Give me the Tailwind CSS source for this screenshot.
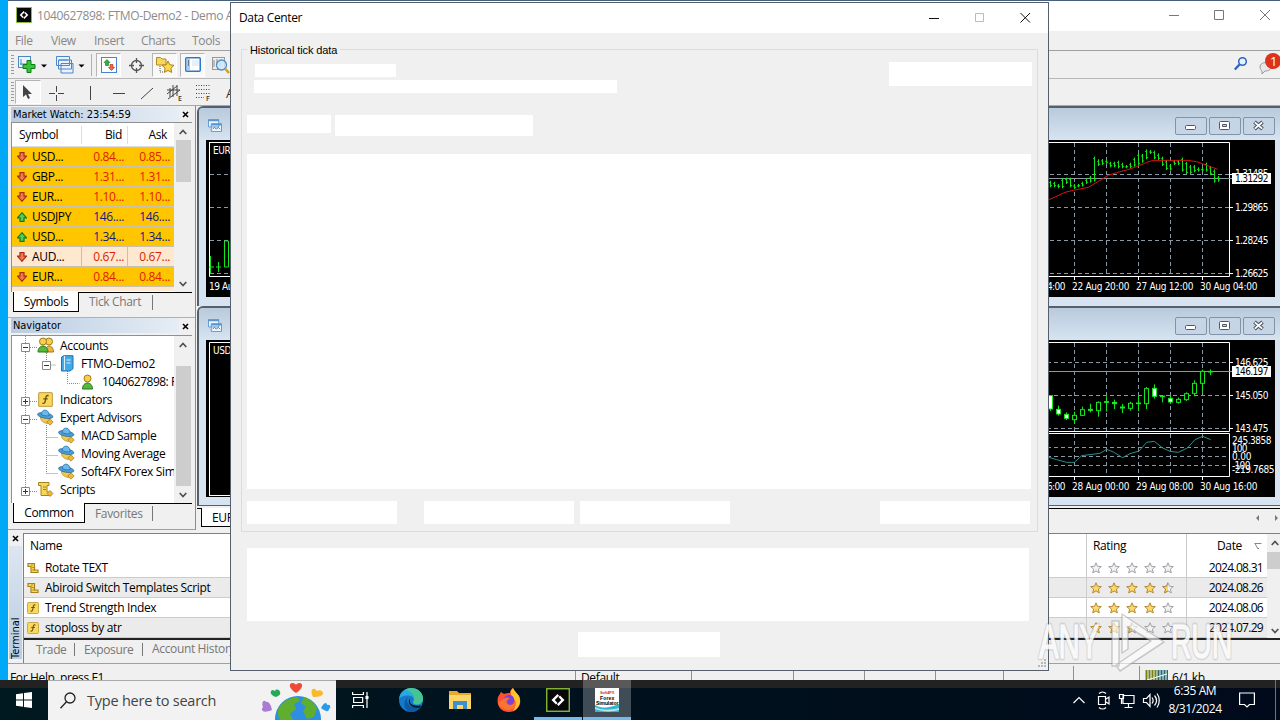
<!DOCTYPE html>
<html lang="en">
<head>
  <meta charset="UTF-8">
  <meta name="viewport" content="width=device-width, initial-scale=1.0">
  <title>Data Center</title>
  <script src="https://cdn.jsdelivr.net/npm/@tailwindcss/browser@4"></script>
</head>
<body class="relative w-[1280px] h-[720px] overflow-hidden bg-[#00a8f8] font-['Open_Sans','Noto_Sans',sans-serif] text-[12px] tracking-[-0.35px] text-black">

  <!-- shared icons -->
  <svg class="hidden">
    <symbol id="down" viewBox="0 0 10 10"><path d="M3 .7h4v3.5h2.5L5 9.3.5 4.200H3z" fill="#f07a50" stroke="#a82c18" stroke-width="1.200"/></symbol>
    <symbol id="up" viewBox="0 0 10 10"><path d="M3 9.300h4V5.800h2.500L5 .7.500 5.800H3z" fill="#4fd05c" stroke="#127a26" stroke-width="1.200"/></symbol>
    <symbol id="star" viewBox="0 0 12 12"><path d="M6 .8 7.500 4.300l3.800.3-2.900 2.500.9 3.800L6 8.900l-3.300 2 .9-3.800L.7 4.600l3.800-.3z"/></symbol>
    <symbol id="script" viewBox="0 0 12 12"><path d="M1 1.500h6.500V8H11v2.500H4V4.500H1z" fill="#f5d75a" stroke="#a8821c" stroke-width="1.200"/><path d="M4 3h2M5 5.500h2M5 8h3" stroke="#a8821c" stroke-width=".8"/></symbol>
    <symbol id="func" viewBox="0 0 12 12"><rect x=".5" y=".5" width="11" height="11" rx="1" fill="#f8d95e" stroke="#c8a850"/><path d="M8.500 3C6.500 2.300 6.200 4 6 6S5.300 9.500 3.500 9M4.200 5.500h3.600" fill="none" stroke="#6b5210" stroke-width="1.100"/></symbol>
    <symbol id="hat" viewBox="0 0 17 17"><path d="M3.500 8c0 4 3 6 7 6.500l3-6z" fill="#f3c948" stroke="#a8821c" stroke-width=".7"/><ellipse cx="8.200" cy="6.500" rx="7.800" ry="2.700" transform="rotate(10 8 6.500)" fill="#4b9fd8" stroke="#2468a0" stroke-width=".7"/><path d="M4.200 5.500c.3-6 7.700-6 8 .8-2 1.200-6 .4-8-.8z" fill="#6bb8ea" stroke="#2468a0" stroke-width=".7"/><path d="m13 9.800 3.200 3.200-3.200 3.200L9.800 13z" fill="#efb83c" stroke="#a87314" stroke-width=".7"/></symbol>
    <symbol id="charts" viewBox="0 0 15 14"><path d="M.5 .5h11v8H.5zM3.500 5h11v8.500h-11z" fill="#eef6ff" stroke="#5d95d0"/><path d="M.5 1.500h11M3.500 6h11" stroke="#5d95d0" stroke-width="2"/><path d="m5 11 2-2 2 2 2-2 2 2" fill="none" stroke="#3d78b8"/></symbol>
    <symbol id="chevup" viewBox="0 0 8 6"><path d="m.7 5 3.300-3.500L7.300 5" fill="none" stroke="#505050" stroke-width="1.700"/></symbol>
    <symbol id="chevdown" viewBox="0 0 8 6"><path d="m.7 1 3.300 3.500L7.300 1" fill="none" stroke="#505050" stroke-width="1.700"/></symbol>
    <symbol id="close" viewBox="0 0 7 7"><path d="m1 1 5 5M6 1 1 6" stroke="#000" stroke-width="1.600"/></symbol>
    <symbol id="mt" viewBox="0 0 24 24"><rect x=".75" y=".75" width="22.500" height="22.500" fill="#080808" stroke="#8fc43c" stroke-width="1.300"/><path d="m11.500 6-6 6 4.500 4.500 1.500-1.500-2.700-3 4.200-4.200zM12.500 18l6-6L14 7.500 12.500 9l2.700 3L11 16.200z" fill="#fff"/></symbol>
  </svg>

  <!-- terminal window -->
  <div class="absolute left-2 top-0 w-[1272px] h-[681px] flex flex-col bg-[#f0f0f0] overflow-hidden border-t border-[#46607c]">
    <div class="h-[30px] shrink-0 bg-white flex items-center pl-2 text-[#8c8c8c]">
      <svg class="w-4 h-4 -mt-[3px]"><use href="#mt"/></svg>
      <span class="ml-[5px] whitespace-nowrap">1040627898: FTMO-Demo2 - Demo Account</span>
      <svg class="ml-auto mr-3 -mt-[2px] w-[102px] h-4 overflow-visible" viewBox="0 0 102 16" fill="none" stroke="#777"><path d="M3 8.500h10M48.500 3.500h9v9h-9zM94 3l10 10M104 3 94 13"/></svg>
    </div>
    <div class="h-5 shrink-0 flex items-center pl-[7px] text-[#878787] border-b border-[#a0a0a0]">
      <span class="w-9">File</span><span class="w-[43px]">View</span><span class="w-[47px]">Insert</span><span class="w-[51px]">Charts</span><span>Tools</span>
    </div>

    <div class="h-[28px] shrink-0 flex items-center border-b border-[#b8b8b8]">
      <svg class="w-2 h-6 shrink-0"><path d="M4.500 2v20" stroke="#999" stroke-width="3" stroke-dasharray="1 2"/></svg>
      <svg class="w-[22px] h-5 shrink-0" viewBox="1 1 22 20"><rect x="3.500" y="2.500" width="12" height="11" fill="#eaf4ff" stroke="#4f86c6"/><path d="M6 5v6M5 10h8" stroke="#4f86c6"/><path d="M12 6.500h4v4h4v4h-4v4h-4v-4H8v-4h4z" fill="#35c43c" stroke="#137a1c"/></svg>
      <svg class="w-3 h-5 shrink-0"><path d="M3 9.500h6L6 12.500z"/></svg>
      <svg class="ml-1 w-[22px] h-5 shrink-0" viewBox="0 0 22 20"><path d="M2.500 1.500h13v9h-13zM4.500 5h13v9h-13zM7 8.500h12V18H7z" fill="#e8f3ff" stroke="#4f86c6"/><path d="M5 5h9M7 8.500h9" stroke="#4f86c6"/></svg>
      <svg class="w-3 h-5 shrink-0"><path d="M2.500 9.500h6L5.500 12.500z"/></svg>
      <span class="ml-[3px] mr-1 w-px h-[22px] bg-[#b0b0b0]"></span>
      <span class="w-[25px] h-6 shrink-0 border border-[#b5b5b5] border-r-white border-b-white bg-[#f8f8f8] flex items-center justify-center"><svg class="w-4 h-4" viewBox="0 0 16 16"><rect x=".5" y=".5" width="15" height="15" fill="#fff" stroke="#4684cc"/><path d="m6 2.500 3 3H7.500v3h-3v-3H3z" fill="#2db13d" stroke="#137a1c" stroke-width=".6"/><path d="m10.500 13.500-3-3H9v-3h3v3h1.500z" fill="#f06848" stroke="#b42815" stroke-width=".6"/></svg></span>
      <svg class="ml-[3px] w-[25px] h-5 shrink-0" viewBox="0 0 25 20" fill="none" stroke="#555" stroke-width="1.300"><circle cx="12.500" cy="10.500" r="5"/><path d="M12.500 3v5m0 5v5M5 10.500h5m5 0h5"/></svg>
      <span class="ml-[3px] w-[25px] h-6 shrink-0 border border-[#b5b5b5] border-r-white border-b-white bg-[#f8f8f8] flex items-center justify-center"><svg class="w-5 h-[18px]" viewBox="0 0 20 18"><path d="M1.500 3V1.500h4L7 3h4v6H1.500z" fill="#f8d85c" stroke="#b18a20"/><path d="M5 10v6h3" fill="none" stroke="#555" stroke-dasharray="1 1"/><path d="m13 5 1.800 3.800 4.200.5-3.100 2.900.8 4.200L13 14.500l-3.700 1.900.8-4.200L7 9.300l4.200-.5z" fill="#fbd94f" stroke="#ad8210"/></svg></span>
      <span class="ml-[3px] w-[25px] h-6 shrink-0 border border-[#b5b5b5] border-r-white border-b-white bg-[#f8f8f8] flex items-center justify-center"><svg class="w-4 h-[15px]" viewBox="0 0 16 15"><rect x=".75" y=".75" width="14.500" height="13.500" rx="1" fill="#fff" stroke="#2e78c4" stroke-width="1.500"/><path d="M2 2h3v11H2z" fill="#a8cdf0"/><path d="M3 4h1M3 6h1M3 8h1" stroke="#223"/><path d="M7 4h7M7 6h7M7 8h7" stroke="#cfe0f4"/></svg></span>
      <svg class="ml-[6px] w-5 h-5 shrink-0" viewBox="0 0 20 20"><rect x="1.500" y="2.500" width="12" height="12" fill="#eee" stroke="#999"/><path d="M3 5v7m3-8v6m3-4v5" stroke="#888"/><circle cx="10.500" cy="10" r="5" fill="#cfe8fb" fill-opacity=".85" stroke="#4e8fc8" stroke-width="1.300"/><path d="m14 13.500 4 4.500" stroke="#d8a018" stroke-width="2.500"/></svg>
      <svg class="ml-auto w-[46px] h-6 shrink-0 -mt-px" viewBox="0 0 46 24"><circle cx="8.500" cy="9.500" r="3.800" fill="#e7f1ff" stroke="#2f5fc0" stroke-width="1.500"/><path d="M5.500 12.500.8 17.500" stroke="#2f5fc0" stroke-width="2.300"/><path d="M26 15c0-6 11-6 11 0 0 3-3 4-6 4l-3 3v-3c-1-1-2-2-2-4z" fill="#e8e8e8" stroke="#999"/><circle cx="39" cy="9" r="8" fill="#df321c"/><text x="36" y="13.500" fill="#fff" font-size="13" font-family="Open Sans">1</text></svg>
    </div>
    <div class="h-[27px] shrink-0 flex items-center border-b border-[#a8a8a8]">
      <svg class="w-[7px] h-6 shrink-0"><path d="M4.500 2v20" stroke="#999" stroke-width="3" stroke-dasharray="1 2"/></svg>
      <span class="w-[26px] h-6 border border-[#b5b5b5] border-r-white border-b-white bg-[#f8f8f8] flex items-center justify-center"><svg class="w-3 h-4" viewBox="1 0 12 16"><path d="M2 1v12l3-2.500L7 15l2-1-2-4h4z" fill="#444"/></svg></span>
      <svg class="w-[190px] h-6" viewBox="41 -1 190 24" fill="none" stroke="#444" stroke-width="1"><path d="M49 12.500h6m3 0h6M56.500 5v6m0 3v6M90.500 5v14M113 12.500h12M141 18l12-11M167 13l10-8M168 18l12-9M170 7v9m3-12v12m4-12v11M167 9h13"/><path d="M196 4.500h14M196 8.500h14M196 12.500h14M196 16.500h8" stroke-dasharray="1 1.500"/><g fill="#333" stroke="none" font-size="7" font-family="Open Sans" font-weight="600"><text x="178" y="20">E</text><text x="206" y="20">F</text><text x="226" y="17" font-size="13" font-weight="400">A</text></g></svg>
    </div>

    <div class="h-[424px] shrink-0 flex">
      <!-- side panels -->
      <div class="w-[188px] shrink-0 flex flex-col border-r border-[#8c8c8c]">
        <div class="h-[212px] shrink-0 flex flex-col px-[3px] border-b border-[#b0b0b0]">
          <div class="h-4 flex items-center justify-between pr-[3px] font-['DejaVu_Sans_Condensed','DejaVu_Sans',sans-serif] text-[11px] tracking-[-0.05px]"><span class="pl-[2px] h-[15px] leading-[15px] w-[168px] bg-linear-to-r from-[#b9cde2] to-[#e6edf5]">Market Watch: 23:54:59</span><svg class="w-[7px] h-[7px]"><use href="#close"/></svg></div>
          <div class="h-[170px] flex bg-white border-t border-l border-[#909090] overflow-hidden">
            <div class="w-[162px] shrink-0">
              <div class="h-6 grid grid-cols-[69px_46px_47px] items-center border-b border-[#ddd]"><span class="pl-[7px]">Symbol</span><span class="text-right pr-[5px] border-l border-[#ddd]">Bid</span><span class="text-right pr-[7px] border-l border-[#ddd]">Ask</span></div>
              <div id="quotes"></div>
            </div>
            <div class="flex-1 bg-[#f0f0f0] flex flex-col items-center"><svg class="mt-[6px] mb-[5px] w-2 h-[6px]"><use href="#chevup"/></svg><span class="w-[15px] h-[42px] bg-[#cdcdcd]"></span><svg class="mt-auto mb-[5px] w-2 h-[6px]"><use href="#chevdown"/></svg></div>
          </div>
          <div class="h-5 ml-[2px] flex border-t border-black text-[#777]"><span class="w-[66px] h-5 -mt-px border border-t-0 border-black bg-white text-black text-center leading-5">Symbols</span><span class="w-[74px] my-[2px] pl-[10px] leading-[14px] border-r border-[#777]">Tick Chart</span></div>
        </div>
        <div class="flex-1 flex flex-col px-[3px] border-b border-[#a0a0a0]">
          <div class="h-[17px] flex items-start justify-between pr-[3px] font-['DejaVu_Sans_Condensed','DejaVu_Sans',sans-serif] text-[11px] tracking-[-0.05px]"><span class="pl-[2px] h-[15px] leading-[15px] w-[168px] bg-linear-to-r from-[#b9cde2] to-[#e6edf5]">Navigator</span><svg class="mt-[5px] w-[7px] h-[7px]"><use href="#close"/></svg></div>
          <div class="h-[168px] flex bg-white border-t border-l border-[#909090]">
            <div class="relative w-[162px] shrink-0 overflow-hidden">
              <svg class="absolute left-0 top-0 w-20 h-[168px]" viewBox="12 335 80 168" fill="none"><path d="M25.500 335v155M30 346.500h7M30 400.500h7M30 418.500h7M30 490.500h7M46.500 352v12h10M67.500 370v12.500h12M46.500 424v48.500M46.500 436.500h12M46.500 454.500h12M46.500 472.500h12" stroke="#888" stroke-dasharray="1 1"/><g fill="#fff" stroke="#888"><path d="M21.500 342.500h8v8h-8zM42.500 360.500h8v8h-8zM21.500 396.500h8v8h-8zM21.500 414.500h8v8h-8zM21.500 486.500h8v8h-8z"/></g><path d="M23 346.500h5M44 364.500h5M23 400.500h5M25.500 398v5M23 418.500h5M23 490.500h5M25.500 488v5" stroke="#334"/></svg>
              <div id="tree" class="relative pt-px"></div>
            </div>
            <div class="flex-1 bg-[#f0f0f0] flex flex-col items-center"><svg class="my-[6px] w-2 h-[6px]"><use href="#chevup"/></svg><span class="mt-3 w-[15px] h-[120px] bg-[#cdcdcd]"></span><svg class="mt-auto mb-[5px] w-2 h-[6px]"><use href="#chevdown"/></svg></div>
          </div>
          <div class="h-5 ml-[2px] flex border-t border-black text-[#777]"><span class="w-[72px] h-5 -mt-px border border-t-0 border-black bg-white text-black text-center leading-5">Common</span><span class="w-[68px] my-[2px] pl-[10px] leading-[15px] border-r border-[#777]">Favorites</span></div>
        </div>
      </div>

      <!-- chart windows -->
      <div class="flex-1 flex flex-col pl-px overflow-hidden">
        <div class="h-[200px] shrink-0 border-t-2 border-l-2 border-[#55606c] rounded-tl-md bg-[#d7e3f0] flex flex-col">
          <div class="h-8 shrink-0 flex items-center gap-[2px] bg-linear-to-b from-[#b8cadc] to-[#d7e4f1] rounded-tl pl-[9px] pr-[5px] pt-[3px]">
            <svg class="w-[14px] h-[13px] mr-auto"><use href="#charts"/></svg>
            <svg class="w-8 h-[18px]"><use href="#wmin"/></svg><svg class="w-8 h-[18px]"><use href="#wmax"/></svg><svg class="w-8 h-[18px]"><use href="#wclose"/></svg>
          </div>
          <svg class="ml-[7px] w-[1069px] h-[157px] shrink-0 bg-black" viewBox="206 140 1069 157" font-family="DejaVu Sans Condensed, DejaVu Sans" font-size="10" fill="#fff">
            <path d="M209 142.500H1229.500V276.500H209.500V142.500" fill="none" stroke="#fff"/>
            <path d="M210 174.500H1229M210 207.500H1229M210 240.500H1229M210 273.500H1229M1074.500 143V276M1106.500 143V276M1138.500 143V276M1170.500 143V276M1202.500 143V276" stroke="#8a98a6" stroke-dasharray="4 3"/>
            <path d="M1040 178.500H1232" stroke="#8a98a6"/>
            <path d="M1230 174.500h3M1230 207.500h3M1230 240.500h3M1230 273.500h3M1074.500 277v3M1138.500 277v3M1202.500 277v3" stroke="#fff"/>
            <g transform="translate(1040 110) scale(.33333)" fill="none" stroke-width="3">
              <path id="bars" stroke="#14e81c"/>
              <path d="M15 274 48 260 75 247 100 241 145 232 175 214 205 196 230 188 260 180 290 170 320 157 340 151H440L470 155 500 166 533 178" stroke="#e01010"/>
            </g>
            <path d="M210.500 256v18M209 267h5M218.500 262v10M216 267h5M224.500 241v26h4v-26z" fill="none" stroke="#14e81c"/>
            <text x="213" y="154">EUR</text><text x="209" y="289.500" textLength="24">19 Au</text>
            <text x="1047" y="289.500" textLength="18">4:00</text><text x="1072" y="289.500" textLength="57">22 Aug 20:00</text><text x="1136" y="289.500" textLength="57">27 Aug 12:00</text><text x="1200" y="289.500" textLength="57">30 Aug 04:00</text>
            <text x="1235" y="177" textLength="33">1.31485</text><text x="1235" y="211" textLength="33">1.29865</text><text x="1235" y="244" textLength="33">1.28245</text><text x="1235" y="277" textLength="33">1.26625</text>
            <path d="M1232 173h39v11h-39z"/><text x="1235" y="182" textLength="33" fill="#000">1.31292</text>
          </svg>
        </div>
        <div class="h-[200px] shrink-0 border-t-2 border-l-2 border-[#55606c] rounded-tl-md bg-[#d7e3f0] flex flex-col border-b">
          <div class="h-8 shrink-0 flex items-center gap-[2px] bg-linear-to-b from-[#b8cadc] to-[#d7e4f1] rounded-tl pl-[9px] pr-[5px] pt-[3px]">
            <svg class="w-[14px] h-[13px] mr-auto"><use href="#charts"/></svg>
            <svg class="w-8 h-[18px]"><use href="#wmin"/></svg><svg class="w-8 h-[18px]"><use href="#wmax"/></svg><svg class="w-8 h-[18px]"><use href="#wclose"/></svg>
          </div>
          <svg class="ml-[7px] w-[1069px] h-[157px] shrink-0 bg-black" viewBox="206 340 1069 157" font-family="DejaVu Sans Condensed, DejaVu Sans" font-size="10" fill="#fff">
            <path d="M209.500 495.500V342.500H1229.500V431.500H1040M1040 433.500H1229.500V476.500H1040M209 495.500h30" fill="none" stroke="#fff"/>
            <path d="M1040 362.500H1229M1040 395.500H1229M1040 428.500H1229M1040 447.500H1229M1040 456.500H1229M1040 465.500H1229M1074.500 343V476M1106.500 343V476M1138.500 343V476M1170.500 343V476M1202.500 343V476" stroke="#8a98a6" stroke-dasharray="4 3"/>
            <path d="M1040 371.500H1232" stroke="#8a98a6"/>
            <path d="M1230 362.500h3M1230 395.500h3M1230 428.500h3M1074.500 477v3M1138.500 477v3M1202.500 477v3" stroke="#fff"/>
            <g transform="translate(1040 305) scale(.33333)" stroke-width="3">
              <g id="candles" stroke="#14e81c"></g>
              <path d="M20 455 50 464 80 472H103L125 452 180 445 200 433 220 441 248 458 270 446 297 438 320 412 343 409 368 429 390 439 415 442 442 429 465 404 488 394 512 404" fill="none" stroke="#2f8f8a"/>
            </g>
            <text x="213" y="354">USD</text>
            <text x="1047" y="489.500" textLength="18">6:00</text><text x="1072" y="489.500" textLength="57">28 Aug 00:00</text><text x="1136" y="489.500" textLength="57">29 Aug 08:00</text><text x="1200" y="489.500" textLength="57">30 Aug 16:00</text>
            <text x="1235" y="366" textLength="33">146.625</text><text x="1235" y="399" textLength="33">145.050</text><text x="1235" y="432" textLength="33">143.475</text>
            <text x="1232" y="444" textLength="39">245.3858</text><text x="1232" y="451.500" textLength="15">100</text><text x="1232" y="460" textLength="19">0.00</text><text x="1232" y="468.500" textLength="18">-100</text><text x="1232" y="473" textLength="42">-219.7685</text>
            <path d="M1232 366h39v11h-39z"/><text x="1235" y="375" textLength="33" fill="#000">146.197</text>
          </svg>
        </div>
        <div class="mt-[2px] h-[22px] shrink-0 flex border-t border-black bg-[#f0f0f0]">
          <span class="ml-1 w-20 h-[19px] pl-[10px] leading-[20px] bg-white border border-t-0 border-black -mt-px">EURUSD</span>
          <svg class="ml-auto w-7 h-4 mt-[1px]"><path d="M7 5v6L4 8zM23 5v6l3-3z" fill="#777"/></svg>
        </div>
      </div>
    </div>

    <!-- terminal panel -->
    <div class="h-[134px] shrink-0 flex border-b border-[#a0a0a0]">
      <div class="w-[15px] shrink-0 flex flex-col items-center">
        <svg class="mt-[5px] mb-1 w-[7px] h-[7px] shrink-0"><use href="#close"/></svg>
        <span class="flex-1 w-[13px] mb-1 bg-linear-to-b from-[#b9cde2] to-[#dce6f1] [writing-mode:vertical-rl] rotate-180 leading-[13px] font-['DejaVu_Sans_Condensed','DejaVu_Sans',sans-serif] text-[11px] tracking-[0px]">Terminal</span>
      </div>
      <div class="flex-1 mt-[3px] flex flex-col border-t border-l border-[#808080]">
        <div class="h-[106px] shrink-0 flex border-b-2 border-[#222] bg-white overflow-hidden">
          <div class="flex-1">
            <div class="h-6 grid grid-cols-[1062px_100px_81px] items-center"><span class="pl-[6px]">Name</span><span class="h-full border-l border-[#ccc] pl-[6px] leading-6">Rating</span><span class="h-full border-l border-[#ccc] pl-[30px] leading-6 flex items-center">Date<svg class="ml-3 w-[8px] h-[8px]"><path d="M.5 1.500h7M1 1.500 4 7l1-1" fill="none" stroke="#888"/></svg></span></div>
            <div id="market"></div>
          </div>
          <div class="w-[13px] bg-[#f0f0f0] flex flex-col items-center"><svg class="my-[6px] ml-[2px] w-2 h-[6px]"><use href="#chevup"/></svg><span class="w-full h-[17px] bg-[#cdcdcd]"></span><svg class="mt-auto mb-1 ml-[2px] w-2 h-[6px]"><use href="#chevdown"/></svg></div>
        </div>
        <div class="flex items-center h-[18px] text-[#777]"><span class="w-[51px] pl-3 leading-[13px] border-r border-[#777]">Trade</span><span class="w-[68px] pl-[9px] leading-[13px] border-r border-[#777]">Exposure</span><span class="pl-[9px]">Account History</span></div>
      </div>
    </div>
    <div class="h-6 shrink-0 mt-[2px] grid grid-cols-[567px_116px_102px_71px_71px_68px_70px_66px_1fr] leading-[24px] overflow-hidden">
      <span class="pl-[2px]">For Help, press F1</span>
      <span class="border-l border-[#909090] pl-[5px]">Default</span>
      <span class="border-l border-[#909090]"></span><span class="border-l border-[#909090]"></span><span class="border-l border-[#909090]"></span><span class="border-l border-[#909090]"></span><span class="border-l border-[#909090]"></span><span class="border-l border-[#909090]"></span>
      <span class="border-l border-[#909090] pl-[5px] flex"><svg class="mt-1 w-[23px] h-4 mr-1"><path d="M1.500 0v16M4.500 0v16M7.500 0v16M10.500 0v16" stroke="#758216" stroke-width="2"/><path d="M13.500 0v16M16.500 0v16M19.500 0v16M22.500 0v16" stroke="#226a70" stroke-width="2"/><path d="M2 10 22 4" stroke="#fff"/></svg>6/1 kb</span>
    </div>
  </div>

  <!-- child window buttons -->
  <svg class="hidden">
    <symbol id="wmin" viewBox="0 0 32 18"><rect x=".5" y=".5" width="31" height="17" rx="1.500" fill="#c6d5e5" stroke="#8292a8"/><rect x="10.500" y="8.500" width="10" height="4" rx="1" fill="#fff" stroke="#505866"/></symbol>
    <symbol id="wmax" viewBox="0 0 32 18"><rect x=".5" y=".5" width="31" height="17" rx="1.500" fill="#c6d5e5" stroke="#8292a8"/><rect x="10.500" y="4.500" width="10" height="8" rx="1" fill="#fff" stroke="#505866"/><path d="M13.500 7.500h4v2h-4z" fill="#c6d5e5" stroke="#505866"/></symbol>
    <symbol id="wclose" viewBox="0 0 32 18"><rect x=".5" y=".5" width="31" height="17" rx="1.500" fill="#c6d5e5" stroke="#8292a8"/><path d="m11.500 5 8 7m0-7-8 7" stroke="#505866" stroke-width="3.800"/><path d="m11.900 5.300 7.200 6.400m0-6.400-7.200 6.400" stroke="#fff" stroke-width="1.800"/></symbol>
  </svg>

  <!-- Data Center dialog -->
  <div class="absolute left-[230px] top-[2px] w-[819px] h-[669px] flex flex-col bg-[#f0f0f0] border border-[#56606c]">
    <div class="h-[30px] shrink-0 bg-white flex items-center pl-2"><span>Data Center</span>
      <svg class="ml-auto w-[116px] h-4 overflow-visible" viewBox="0 0 116 16" fill="none" stroke="#111"><path d="M-3 8.500h10"/><path d="M43.500 3.500h8v8h-8z" stroke="#bbb"/><path d="m88.500 3 9.500 9.500M98 3l-9.500 9.500"/></svg>
    </div>
    <div class="relative ml-[10px] mt-4 w-[797px] h-[483px] shrink-0 border border-[#dcdcdc] flex flex-col pl-[5px]">
      <span class="absolute -top-2 left-[5px] px-[3px] bg-[#f0f0f0] leading-[17px] font-['Liberation_Sans',sans-serif] text-[11px] tracking-[-0.1px]">Historical tick data</span>
      <div class="mt-3 flex h-[53px]">
        <div class="w-[642px] pl-[7px] pt-[2px]"><div class="ml-px w-[141px] h-[13px] bg-white"></div><div class="mt-[3px] w-[363px] h-[13px] bg-white"></div></div>
        <div class="w-[143px] h-6 bg-white"></div>
      </div>
      <div class="flex gap-1 h-[39px]"><div class="w-[84px] h-[18px] bg-white"></div><div class="w-[198px] h-[21px] bg-white"></div></div>
      <div class="w-[784px] h-[335px] bg-white"></div>
      <div class="mt-3 flex h-[23px]"><div class="w-[150px] bg-white"></div><div class="ml-[27px] w-[150px] bg-white"></div><div class="ml-[6px] w-[150px] bg-white"></div><div class="ml-[150px] w-[150px] bg-white"></div></div>
    </div>
    <div class="mt-4 ml-4 w-[782px] h-[73px] shrink-0 bg-white"></div>
    <div class="mt-[11px] flex justify-between"><div class="ml-[347px] w-[142px] h-[25px] bg-white"></div><svg class="w-3 h-3 mt-[25px]"><path d="M8 2h2v2H8zM5 5h2v2H5zM8 5h2v2H8zM2 8h2v2H2zM5 8h2v2H5zM8 8h2v2H8z" fill="#b8b8b8"/></svg></div>
  </div>

  <!-- watermark -->
  <svg class="absolute left-[1034px] top-[610px] w-[204px] h-[68px]" viewBox="1034 610 204 68" font-family="Liberation Sans Narrow, Liberation Sans" font-size="48" fill="#fff" fill-opacity=".6">
    <g stroke="#888" stroke-opacity=".22" stroke-width="5" stroke-linejoin="round" paint-order="stroke">
      <text x="1039" y="658" textLength="60" lengthAdjust="spacingAndGlyphs">ANY</text>
      <text x="1171" y="658" textLength="61" lengthAdjust="spacingAndGlyphs">RUN</text>
    </g>
    <g stroke="#fff" stroke-opacity=".6" stroke-width="1.500">
      <text x="1039" y="658" textLength="60" lengthAdjust="spacingAndGlyphs">ANY</text>
      <text x="1171" y="658" textLength="61" lengthAdjust="spacingAndGlyphs">RUN</text>
    </g>
    <path d="M1112 621h7v45h-7zM1122 614l42 28-44 29-4-6 35-24-23-14v22l-6 4z" stroke="#888" stroke-opacity=".4" stroke-width="1.500" stroke-linejoin="round"/>
  </svg>

  <!-- taskbar -->
  <div class="absolute left-0 top-[680px] w-[1280px] h-10 flex bg-linear-to-r from-[#001820] to-[#000a1a] text-white">
    <div class="absolute inset-x-0 top-0 h-2 bg-[#222]"></div>
    <div class="relative w-12 flex items-center justify-center"><svg class="w-4 h-4" viewBox="0 0 16 16"><path d="M0 2.200 7 1.200v6.300H0zM8 1l8-1v7.500H8zM0 8.500h7v6.300l-7-1zM8 8.500h8V16l-8-1z" fill="#fff"/></svg></div>
    <div class="relative w-72 bg-[#f2f2f2] border-t border-[#aaa] flex items-center text-[#444]">
      <svg class="ml-3 w-4 h-[17px]" viewBox="0 0 16 17" fill="none" stroke="#222" stroke-width="1.300"><circle cx="10" cy="6" r="5"/><path d="m6.500 9.700-6 6.500"/></svg>
      <span class="ml-[11px] text-[14.500px] tracking-[-0.22px]">Type here to search</span>
      <svg class="ml-auto mr-[5px] w-[70px] h-[39px]" viewBox="261 681 70 39"><circle cx="298" cy="719" r="23" fill="#2e8fe0"/><path d="M280 706c5-6 12-9 18-9l2 4-6 3 2 5-6 5 3 6h-12c-4-4-4-10-1-14zM304 697c6 2 10 6 13 11l-3 9-7 2-4-8 3-4-5-4z" fill="#5fae2e"/><path d="M296 693c-8-5-7-10-3.500-10 2 0 3 1 3.500 2 .5-1 1.500-2 3.500-2 3.500 0 4.500 5-3.500 10z" fill="#ee4a35"/><path d="M276 697c-7-2-6-7-3-7l2 1c1-2 4-2 5 1 1 2-1 4-4 5z" fill="#25a85a"/><path d="M313 697c-3-6-1-9 2-8l2 2c3-2 6 0 6 2 0 3-4 4-10 4z" fill="#f9b928"/><path d="M272 710c-9 4-12 0-9-3-2-5 1-8 3-5 3-1 5 3 6 8z" fill="#a97bd4"/><path d="M321 708c3-6 6-6 6-3 4-1 4 3 2 4 0 3-3 3-8-1z" fill="#2b9be8"/></svg>
    </div>
    <div class="relative w-12 mr-[3px] flex items-center justify-center"><svg class="w-[17px] h-4" viewBox="0 0 17 16" fill="none" stroke="#fff" stroke-width="1.200"><path d="M.6 0v2.500h10.800V0M1.600 5.500h9v5h-9zM.6 16v-2.500h10.800V16M15 0v16"/><path d="M13.500 4h3v3h-3z" fill="#fff" stroke="none"/></svg></div>
    <div class="relative flex gap-px">
      <div class="w-12 flex items-center justify-center"><svg class="w-6 h-6" viewBox="0 0 24 24"><circle cx="12" cy="12" r="12" fill="#1479c8"/><path d="M0 11C1 4 6 0 12 0c7 0 12 5 12 10.500 0 4-3 6-6.500 6-3 0-4-1.500-3-3 1.500-3-1-6-5-6C5 7.500 1 9 0 11z" fill="#2aa9dc"/><path d="M12 0c7 0 12 5 12 10.500 0 4-3 6-6.500 6-3 0-4-1.500-3-3C17 9 14 3 6 2c2-1.300 4-2 6-2z" fill="#52cf78" fill-opacity=".75"/><path d="M9 9c-3 5 1 12 12 10-3 4-7 5-10 5-6-2-8-10-2-15z" fill="#0c59a4"/><path d="M11.500 10c-2 4 0 9 10.500 7.500l-1 2C12 21 7 14 11.500 10z" fill="#001620"/></svg></div>
      <div class="w-12 flex items-center justify-center"><svg class="w-[22px] h-[18px]" viewBox="0 0 22 18"><path d="M0 0h8l2 2h12v15H0z" fill="#e9a92a"/><path d="M0 4h22v14H0z" fill="#fcd667"/><path d="M4 18v-8h14v8h-4v-4H8v4z" fill="#3d8fd0"/></svg></div>
      <div class="w-12 flex items-center justify-center"><svg class="w-6 h-6" viewBox="0 0 24 24"><path d="M4 4 7 6c2-1 4-1 6-1 0-2 1-4 3-5 1 3 4 5 6 8 4 8-2 16-10 16S-1 18 1 9c1-2 2-3 3-5z" fill="#ff5035"/><path d="M16 0c1 3 4 5 6 8 3 7-1 13-6 15 4-6 3-10 0-13-2-2-4-6 0-10z" fill="#ffc42c"/><circle cx="12" cy="12" r="5.300" fill="#7d43d6"/><path d="M1 13c2 2 4-1 7-3 2-1 4 0 5 1-2 0-4 2-3 4 3 4 8 1 9-3 1 6-3 10-7 10-6 0-11-4-11-9z" fill="#ff7a2c" fill-opacity=".85"/></svg></div>
      <div class="w-12 flex items-center justify-center border-b-3 border-[#76b9ed]"><svg class="w-6 h-6 mt-[3px]"><use href="#mt"/></svg></div>
      <div class="w-12 flex items-center justify-center border-b-3 border-[#76b9ed] bg-white/25"><svg class="w-6 h-6 mt-[3px]" viewBox="0 0 24 24"><path d="M0 0h24v24H0z" fill="#fff"/><path d="M0 17c8 4 14 3 24-1v8H0z" fill="#37b4d0"/><path d="M0 19c8 4 16 3 24 1v2c-8 2-16 2-24-1z" fill="#b6e8f0"/><g font-family="Liberation Sans" font-weight="700"><text x="5" y="6" font-size="4" fill="#c33" textLength="14">Soft4FX</text><text x="5" y="12" font-size="5" textLength="14">Forex</text><text x="1" y="16.500" font-size="5" textLength="22">Simulator</text></g></svg></div>
    </div>
    <div class="relative ml-auto flex items-center">
      <svg class="w-[94px] h-5" viewBox="1070 690 94 20" fill="none" stroke="#fff" stroke-width="1.200"><path d="m1073.500 703 5.500-5.500 5.500 5.500M1098.500 696.500h7v8h-7zM1106 699l3-2v7l-3-2M1099 693.500c2-2 5-2 7 0M1099 707.500c2 2 5 2 7 0M1123 695.500h11v8h-11zM1128.500 704v3M1124.500 707.500h8M1119.500 694.500h4v4h-4zM1121.500 699v5M1143.500 698.500h3l3.500-4v12l-3.500-4h-3zM1152 697.500c1.500 2 1.500 4 0 6M1154.500 695.500c2.500 3 2.500 7 0 10M1157 693.500c3 4 3 10 0 14"/></svg>
      <div class="w-[62px] -mt-px text-center leading-[18px] text-[12px] tracking-[-0.4px]"><div>6:35 AM</div><div>8/31/2024</div></div>
      <svg class="ml-[13px] w-4 h-4" viewBox="0 0 16 16" fill="none" stroke="#fff" stroke-width="1.200"><path d="M.6 1h14.800v11.500H10.500L8 15l-2.500-2.500H.6z"/></svg>
      <span class="ml-5 mr-1 w-px h-10 bg-[#6b7480]"></span>
    </div>
  </div>

  <script>
    const quotes = [
      ['down', 'USD...', '0.84...', '0.85...'],
      ['down', 'GBP...', '1.31...', '1.31...'],
      ['down', 'EUR...', '1.10...', '1.10...'],
      ['up', 'USDJPY', '146....', '146....'],
      ['up', 'USD...', '1.34...', '1.34...'],
      ['down', 'AUD...', '0.67...', '0.67...'],
      ['down', 'EUR...', '0.84...', '0.84...'],
    ];
    document.getElementById('quotes').innerHTML = quotes.map(([dir, name, bid, ask], i) => `
      <div class="h-5 grid grid-cols-[69px_46px_47px] leading-[19px] border-b border-[#c8c0b0] ${i === 5 ? 'bg-[#ffe8d0]' : 'bg-[#ffc600]'}">
        <span class="flex items-center gap-[5px] pl-[5px]"><svg class="w-[10px] h-[10px]"><use href="#${dir}"/></svg>${name}</span>
        <span class="text-right pr-[3px] border-l border-[#c8c0b0] ${dir === 'up' ? 'text-[#18187c]' : 'text-[#e02000]'}">${bid}</span>
        <span class="text-right pr-1 border-l border-[#c8c0b0] ${dir === 'up' ? 'text-[#18187c]' : 'text-[#e02000]'}">${ask}</span>
      </div>`).join('') + '<div class="h-1 bg-[#ffe8d0]"></div>';

    const people = '<circle cx="6" cy="4.500" r="3.500" fill="#f6cf4c" stroke="#a17a15"/><path d="M1 15c0-8 10-8 10 0z" fill="#55b93a" stroke="#28751c"/>';
    const tree = [
      ['pl-[25px]', '<circle cx="12" cy="4.500" r="3.500" fill="#f6cf4c" stroke="#a17a15"/><path d="M8 15c0-8 8.500-8 8.500 0z" fill="#f0b53c" stroke="#a17a15"/>' + people, 'Accounts'],
      ['pl-[46px]', '<path d="M3.500 2 6 .7h9v13L12 16H3.500z" fill="#43a8e8" stroke="#1e74b8"/><path d="M6.500 1v14M8.500 5h4M8.500 8h4" stroke="#d8f0ff"/>', 'FTMO-Demo2'],
      ['pl-[67px] tracking-[-0.5px]', '<g transform="translate(2.500 1)">' + people + '</g>', '1040627898: FTMO'],
      ['pl-[25px]', '<svg x="1" y="1" width="15" height="15"><use href="#func"/></svg>', 'Indicators'],
      ['pl-[25px]', '<use href="#hat"/>', 'Expert Advisors'],
      ['pl-[46px]', '<use href="#hat"/>', 'MACD Sample'],
      ['pl-[46px]', '<use href="#hat"/>', 'Moving Average'],
      ['pl-[46px]', '<use href="#hat"/>', 'Soft4FX Forex Simulator'],
      ['pl-[25px]', '<path d="M1.500 1.500H12v3h-2V11h4v3.500H4V4.500H1.500z" fill="#f5d75a" stroke="#a8821c"/><path d="M6 6h3M6 8.500h3" stroke="#a8821c"/><path d="m13 9.500 3 3-3 3-3-3z" fill="#efb83c" stroke="#a87314" stroke-width=".7"/>', 'Scripts'],
    ];
    document.getElementById('tree').innerHTML = tree.map(([pad, icon, label]) => `
      <div class="h-[18px] flex items-center whitespace-nowrap ${pad}"><svg class="w-[17px] h-[17px] shrink-0 mr-[6px] -mt-[2px]" viewBox="0 0 17 17">${icon}</svg>${label}</div>`).join('');

    const market = [
      ['script', 'Rotate TEXT', 0, '2024.08.31'],
      ['script', 'Abiroid Switch Templates Script', 4.5, '2024.08.26'],
      ['func', 'Trend Strength Index', 4, '2024.08.06'],
      ['func', 'stoploss by atr', 2.5, '2024.07.29'],
    ];
    const star = fill => {
      if (fill >= 1) return '<svg class="w-3 h-3 fill-[#ffd766] stroke-[#b08a3c]"><use href="#star"/></svg>';
      const half = fill > 0 ? '<svg width="6" height="12" class="fill-[#ffd766] stroke-[#b08a3c]"><use href="#star" width="12" height="12"/></svg>' : '';
      return `<svg class="w-3 h-3 fill-[#f2f2f2] stroke-[#a0a0a8]"><use href="#star"/>${half}</svg>`;
    };
    document.getElementById('market').innerHTML = market.map(([icon, name, rating, date], i) => `
      <div class="h-5 grid grid-cols-[1062px_100px_81px] border-b border-[#ccc] leading-[20px] ${i % 2 ? 'bg-[#ebebeb]' : 'bg-white'}">
        <span class="flex items-center gap-[6px] pl-[3px]"><svg class="w-3 h-3"><use href="#${icon}"/></svg>${name}</span>
        <span class="flex items-center gap-[6px] pl-[3px] border-l border-[#ccc]">${[0, 1, 2, 3, 4].map(n => star(rating - n)).join('')}</span>
        <span class="text-right pr-1 border-l border-[#ccc] tracking-[-0.7px]">${date}</span>
      </div>`).join('');

    // high/low pairs, one bar every 12 units
    const bars = [212,232, 215,232, 222,235, 205,235, 203,222, 203,232, 222,237, 222,232, 215,230, 205,222, 198,218, 140,215, 148,168, 147,165, 148,162, 155,172, 155,172, 152,175, 158,175, 165,175, 158,175, 143,170, 130,165, 132,158, 118,148, 120,132, 122,148, 130,150, 140,168, 150,180, 162,182, 150,165, 150,165, 143,185, 155,192, 165,192, 165,187, 172,185, 173,185, 158,185, 168,195, 178,218, 198,215];
    let d = '';
    for (let i = 0; i < bars.length; i += 2) {
      const x = 31.5 + i * 6;
      d += `M${x} ${bars[i]}V${bars[i + 1]}M${x - 4} ${bars[i] + 6}h4M${x} ${bars[i + 1] - 5}h5`;
    }
    document.getElementById('bars').setAttribute('d', d);

    // x, high, top, bottom, low, filled
    const candles = [
      [31,270,272,312,318,1], [55,302,313,327,332,1], [79,322,328,340,345,1], [103,320,331,344,356,0], [127,305,314,331,333,0],
      [151,296,313,316,322,1], [175,289,292,317,335,0], [199,274,290,292,320,1], [223,284,292,296,312,1], [247,297,306,309,324,1],
      [271,290,295,310,317,0], [295,270,294,296,318,1], [319,246,251,296,312,0], [343,238,250,274,281,1], [367,272,273,275,292,1],
      [391,272,280,291,297,1], [415,278,283,292,296,0], [439,262,266,284,288,0], [463,226,235,265,274,0], [487,194,199,235,262,0], [511,193,199,201,210,1],
    ];
    document.getElementById('candles').innerHTML = candles.map(([x, h, t, b, l, f]) =>
      `<path d="M${x + .5} ${h}V${l}"/><rect x="${x - 5.5}" y="${t}" width="12" height="${b - t}" fill="${f ? '#fff' : '#000'}"/>`).join('');
  </script>
</body>
</html>
